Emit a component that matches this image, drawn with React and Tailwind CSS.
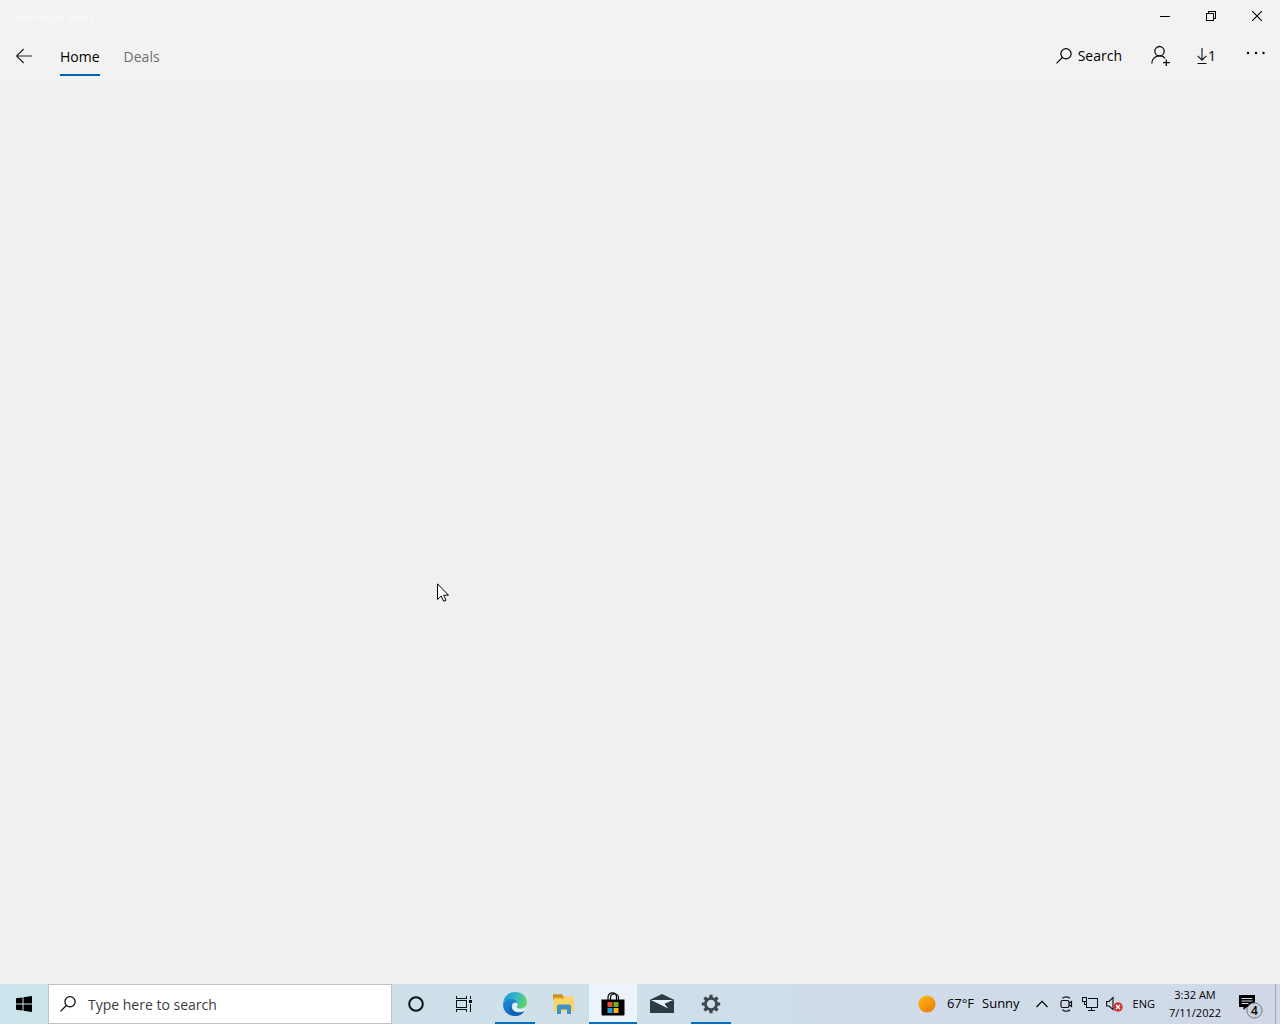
import React, { useState } from 'react';

const TABS = ['Home', 'Deals'];

const WindowControls = () => (
  <div className="flex">
    <button aria-label="Minimize" className="w-[46px] h-8 flex items-center justify-center hover:bg-black/10">
      <svg width="10" height="10" viewBox="0 0 10 10" shapeRendering="crispEdges">
        <path d="M0 5.5H10" stroke="#000" />
      </svg>
    </button>
    <button aria-label="Restore" className="w-[46px] h-8 flex items-center justify-center hover:bg-black/10">
      <svg width="10" height="10" viewBox="0 0 10 10" fill="none" stroke="#000" shapeRendering="crispEdges">
        <path d="M.5 2.5H7.5V9.5H.5ZM2.5 2.5V.5H9.5V7.5H7.5" />
      </svg>
    </button>
    <button aria-label="Close" className="w-[46px] h-8 flex items-center justify-center hover:bg-red-600">
      <svg width="10" height="10" viewBox="0 0 10 10" fill="none" stroke="#000" strokeWidth="1.1">
        <path d="M0 0L10 10M10 0L0 10" />
      </svg>
    </button>
  </div>
);

const SearchIcon = () => (
  <svg width="16" height="16" viewBox="0 0 16 16" fill="none" stroke="currentColor" strokeWidth="1.2">
    <circle cx="10" cy="5.8" r="5.1" />
    <path d="M6.3 9.5L.5 15.3" />
  </svg>
);

const StoreHeader = () => {
  const [active, setActive] = useState('Home');

  return (
    <header className="bg-[#f2f2f2]">
      <div className="flex justify-between items-center h-8">
        <h1 className="pl-4 pt-1 text-[11px] text-[#fafafa]">Microsoft Store</h1>
        <WindowControls />
      </div>

      <div className="flex items-center justify-between h-12">
        <nav className="flex items-center h-full">
          <button aria-label="Back" className="w-12 h-12 flex items-center justify-center">
            <svg width="16" height="16" viewBox="0 0 16 16" fill="none" stroke="#222" strokeWidth="1.1">
              <path d="M16 8H.8M7.6 1L.6 8L7.6 15" />
            </svg>
          </button>
          <div className="flex gap-6 pl-3 h-full">
            {TABS.map((tab) => (
              <button
                key={tab}
                onClick={() => setActive(tab)}
                className={`h-11 pt-2 text-sm border-b-2 ${active === tab
                  ? 'text-black border-[#0067b8]'
                  : 'text-[#6e6e6e] border-transparent'
                  }`}
              >
                {tab}
              </button>
            ))}
          </div>
        </nav>

        <div className="flex items-center text-sm text-black pr-[14px]">
          <button className="flex items-center gap-[6px]">
            <SearchIcon />
            Search
          </button>
          <button aria-label="Sign in" className="ml-7">
            <svg width="20" height="22" viewBox="0 0 20 22" fill="none" stroke="#111" strokeWidth="1.3">
              <circle cx="9.5" cy="6.2" r="4.7" />
              <path d="M1.800 18.500C1.800 14.200 4.800 10.900 9.500 10.900C12 10.900 14 12 15 13.500" />
              <path d="M16.300 14.500V21M13 17.700H20" />
            </svg>
          </button>
          <button aria-label="Downloads" className="ml-[26px] flex items-center">
            <svg width="12" height="18" viewBox="0 0 12 18" fill="none" stroke="#111" strokeWidth="1.1">
              <path d="M6 1V13M1.7 8.8L6 13.1L10.3 8.8M1.5 16.5H10.5" />
            </svg>
            1
          </button>
          <button aria-label="See more" className="ml-[30px] pb-[6px]">
            <svg width="20" height="4" viewBox="0 0 20 4" fill="#000">
              <circle cx="2" cy="2" r="1.2" />
              <circle cx="10" cy="2" r="1.2" />
              <circle cx="17.5" cy="2" r="1.2" />
            </svg>
          </button>
        </div>
      </div>
    </header>
  );
};

const EdgeIcon = () => (
  <svg width="24" height="24" viewBox="0 0 24 24">
    <defs>
      <linearGradient id="edgeTop" x1="0" y1="0.3" x2="1" y2="0.6">
        <stop offset="0" stopColor="#2098dc" />
        <stop offset="0.5" stopColor="#35b9c6" />
        <stop offset="1" stopColor="#62d45c" />
      </linearGradient>
      <linearGradient id="edgeLow" x1="0" y1="0" x2="0.6" y2="1">
        <stop offset="0" stopColor="#1b8fd8" />
        <stop offset="1" stopColor="#0f62b8" />
      </linearGradient>
    </defs>
    <path d="M.2 11C.8 4.700 5.600 0 12 0C19 0 24 4.900 24 10.300C24 14.200 21 16.600 17.400 16.600C15 16.600 13.500 15.800 13.600 14.900C13.700 14.200 14.600 13.900 14.600 12.200C14.600 9 11.500 6.900 8 6.900C4.500 6.900 1.500 8.500 .2 11Z" fill="url(#edgeTop)" />
    <path d="M0 12.500C.5 8.800 4 6.700 7.800 6.700C11.400 6.700 14.500 9 14.600 12C13.600 10.900 12 10.300 10.500 10.900C8.200 12 7.900 15.200 9.600 17.700C11.700 20.800 16.900 21.600 21.300 18.900C19.400 22 16 24 12 24C5.300 24 0 19 0 12.500Z" fill="url(#edgeLow)" />
    <path d="M10.500 10.900C7.600 11.800 6.300 14.800 7 17.600C7.800 20.900 10.500 23.300 13.800 23.900C17 23.400 19.800 21.500 21.300 18.900C16.900 21.600 11.700 20.800 9.600 17.700C7.900 15.200 8.200 12 10.500 10.900Z" fill="#1560ad" />
    <path d="M14.300 11.300C12.900 10.500 11.200 10.800 10.200 12.200C9.200 14.200 9.600 16.400 11 18C13.600 20.300 18.200 20.300 21.800 18.300L22.800 16C20.500 17.400 16.600 17.500 14.400 16.200C13.400 15.500 13.500 14.700 14 13.900C14.500 13 14.600 12.100 14.300 11.300Z" fill="#e3f1f7" />
  </svg>
);

const ExplorerIcon = () => (
  <svg width="24" height="22" viewBox="0 0 24 22">
    <path d="M1 1.500H10L12 4H20V7H1Z" fill="#dba528" />
    <path d="M1 1.500H10.500V4H1Z" fill="#c98f17" />
    <path d="M2 5.500H11.500L13 3.500H22V18.500H2Z" fill="#fbd567" />
    <path d="M5 21V13.500C5 12.300 5.700 11.500 7 11.500H17C18.300 11.500 19 12.300 19 13.500V21H15V16.500H9V21Z" fill="#3f93c9" />
  </svg>
);

const StoreIcon = () => (
  <svg width="24" height="24" viewBox="0 0 24 24">
    <path d="M7 8V5.500C7 2.500 9 .8 11.500 .8C14 .8 15.500 2.500 15.500 5V8M9.500 8V5.500C9.500 3.500 11 2 13.500 2C16 2 17.500 3.800 17.500 6V8" fill="none" stroke="#000" strokeWidth="1.2" />
    <path d="M.5 7.500H23.500V22C23.500 23 23 23.500 22 23.500H2C1 23.500 .5 23 .5 22Z" fill="#000" />
    <path d="M6.500 10H11.500V15H6.500Z" fill="#e8502b" />
    <path d="M12.500 10H17.500V15H12.500Z" fill="#74b01c" />
    <path d="M6.500 16H11.500V21H6.500Z" fill="#1ba0e0" />
    <path d="M12.500 16H17.500V21H12.500Z" fill="#f8b41a" />
  </svg>
);

const MailIcon = () => (
  <svg width="24" height="20" viewBox="0 0 24 20">
    <path d="M0 5.800L12 0L24 5.800V19H0Z" fill="#2d3b45" />
    <path d="M1 6H23.200L14.500 9.800L18.200 14.500Z" fill="#e9f3f8" />
  </svg>
);

const SettingsIcon = () => (
  <svg width="20" height="20" viewBox="0 0 20 20" fill="none" stroke="#3a4650">
    <circle cx="10" cy="10" r="5.600" strokeWidth="2.800" />
    <path
      d="M10 .8V4M10 16V19.200M.8 10H4M16 10H19.200M3.500 3.500L5.800 5.800M14.200 14.200L16.500 16.500M16.500 3.500L14.200 5.800M5.800 14.200L3.500 16.500"
      strokeWidth="3.200"
    />
  </svg>
);

const apps = [
  { name: 'Microsoft Edge', icon: <EdgeIcon />, state: 'running' },
  { name: 'File Explorer', icon: <ExplorerIcon />, state: 'pinned' },
  { name: 'Microsoft Store', icon: <StoreIcon />, state: 'active' },
  { name: 'Mail', icon: <MailIcon />, state: 'pinned' },
  { name: 'Settings', icon: <SettingsIcon />, state: 'running' },
];

const AppButton = ({ app }) => (
  <button
    aria-label={app.name}
    className={`w-12 h-10 flex flex-col items-center ${app.state === 'active' ? 'bg-[#edf4f9]' : ''}`}
  >
    <span className="flex-1 flex items-center justify-center pt-[2px]">{app.icon}</span>
    {app.state === 'active' && <span className="w-full h-[2px] bg-[#0070c5]" />}
    {app.state === 'running' && <span className="w-10 h-[2px] bg-[#0070c5]" />}
    {app.state === 'pinned' && <span className="h-[2px]" />}
  </button>
);

const Tray = () => (
  <div className="flex items-center h-full text-black">
    <button className="flex items-center text-[13px] mr-4">
      <svg width="18" height="18" viewBox="0 0 18 18" className="mr-[11px]">
        <defs>
          <linearGradient id="sun" x1="0.2" y1="0" x2="0.8" y2="1">
            <stop offset="0" stopColor="#fdb813" />
            <stop offset="1" stopColor="#f07a0c" />
          </linearGradient>
        </defs>
        <circle cx="9" cy="9" r="8.600" fill="url(#sun)" />
      </svg>
      <span className="mr-2">67°F</span>
      <span>Sunny</span>
    </button>
    <button aria-label="Show hidden icons" className="mr-3">
      <svg width="12" height="8" viewBox="0 0 12 8" fill="none" stroke="#000" strokeWidth="1.200">
        <path d="M.5 7L6 1.300L11.500 7" />
      </svg>
    </button>
    <button aria-label="Meet Now" className="mr-[9px]">
      <svg width="13" height="16" viewBox="0 0 13 16" fill="none" stroke="#0c1118" strokeWidth="1.200">
        <rect x="1" y="4.500" width="8" height="7" rx="1.500" />
        <path d="M9 7L11.500 5.500V10.500L9 9M2.500 2.200C4.500 .3 8 .3 10 2.200M2.500 13.800C4.500 15.700 8 15.700 10 13.800" />
      </svg>
    </button>
    <button aria-label="Network" className="mr-2">
      <svg width="16" height="14" viewBox="0 0 16 14" fill="none" stroke="#0c1118" shapeRendering="crispEdges">
        <path d="M5.500 1.500H15.500V10.500H4.500V5M9.500 10.500V13M6 13.500H13" />
        <path d="M.5 .5H4.500V4.500H.5ZM2.500 4.500V7.500H4.500" />
      </svg>
    </button>
    <button aria-label="Volume muted" className="mr-[10px]">
      <svg width="17" height="16" viewBox="0 0 17 16" fill="none">
        <path d="M.6 5.500H3L7 1.500V13.500L3 10H.6Z" stroke="#0c1118" strokeWidth="1.100" />
        <circle cx="12" cy="11" r="4.700" fill="#d32f34" />
        <path d="M10 9L14 13M14 9L10 13" stroke="#fff" strokeWidth="1.300" />
      </svg>
    </button>
    <button className="text-[11px] mr-2">ENG</button>
    <button className="w-16 text-center text-[11px] leading-[18px]">
      <span className="block">3:32 AM</span>
      <span className="block">7/11/2022</span>
    </button>
    <button aria-label="4 new notifications" className="w-12 h-10 pl-3 flex items-center">
      <svg width="26" height="30" viewBox="0 0 26 30">
        <path d="M0 6H16V18H8L4.500 21V18H0Z" fill="#000" />
        <path d="M2.500 9.500H13.500M2.500 12H13.500M2.500 14.500H9.500" stroke="#d0dae8" />
        <circle cx="15.500" cy="21.500" r="7.600" fill="#cbd2da" stroke="#747b82" />
        <text x="15.500" y="26" textAnchor="middle" fontSize="12" fontWeight="600" fill="#000">4</text>
      </svg>
    </button>
    <button aria-label="Show desktop" className="w-[5px] h-10 border-l border-[#9ea9b8]" />
  </div>
);

const Taskbar = () => (
  <footer className="flex items-center justify-between h-10 bg-linear-to-r from-[#cbe3ea] via-[#cfdfe9] to-[#d0d8e7]">
    <div className="flex items-center h-full">
      <button aria-label="Start" className="w-12 h-10 flex items-center justify-center">
        <svg width="16" height="16" viewBox="0 0 16 16" fill="#000">
          <path d="M0 2.300L6.500 1.400V7.500H0ZM7.500 1.200L16 0V7.500H7.500ZM0 8.500H6.500V14.600L0 13.700ZM7.500 8.500H16V16L7.500 14.800Z" />
        </svg>
      </button>
      <label className="w-[344px] h-10 flex items-center gap-3 pl-[11px] bg-white border border-[#bfc4c8]">
        <SearchIcon />
        <input
          type="text"
          aria-label="Type here to search"
          placeholder="Type here to search"
          className="flex-1 min-w-0 pt-[2px] text-sm outline-none placeholder:text-[#3c3c3c]"
        />
      </label>
      <button aria-label="Cortana" className="w-12 h-10 flex items-center justify-center">
        <svg width="16" height="16" viewBox="0 0 16 16" fill="none">
          <circle cx="8" cy="8" r="6.800" stroke="#0b1118" strokeWidth="2" />
        </svg>
      </button>
      <button aria-label="Task View" className="w-12 h-10 flex items-center justify-center">
        <svg width="16" height="16" viewBox="0 0 16 16" fill="none" stroke="#0b1118" shapeRendering="crispEdges">
          <path d="M.5 0V2.500H10.500V0M.5 4.500H10.500V11.500H.5ZM.5 16V13.500H10.500V16M14.500 0V3M14.500 8V16" />
          <path d="M13 4H16V7H13Z" fill="#0b1118" stroke="none" />
        </svg>
      </button>
      <div className="flex gap-px pl-[3px]">
        {apps.map((app) => (
          <AppButton key={app.name} app={app} />
        ))}
      </div>
    </div>
    <Tray />
  </footer>
);

const App = () => {
  return (
    <div className="relative flex flex-col min-h-screen bg-[#f0f0f0] font-['Open_Sans','Noto_Sans',sans-serif]">
      <StoreHeader />
      <main className="flex-1" />
      <Taskbar />

      {/* Mouse pointer */}
      <svg className="absolute left-[437px] top-[583px] pointer-events-none" width="12" height="19" viewBox="0 0 12 19">
        <path
          d="M.5 .8V16.500L4.200 13L6.700 18.300L9 17.200L6.600 12.200H11.500Z"
          fill="#fff"
          stroke="#000"
          strokeWidth="1"
        />
      </svg>
    </div>
  );
};

export default App;
